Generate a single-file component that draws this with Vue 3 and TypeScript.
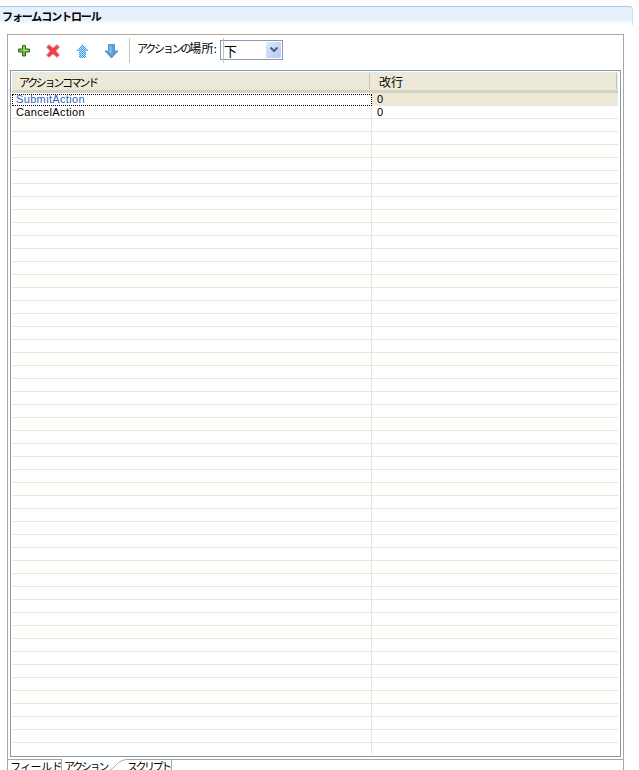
<script setup lang="ts">
interface ActionRow {
  command: string
  lineBreak: string
}

const actions: ActionRow[] = [
  { command: 'SubmitAction', lineBreak: '0' },
  { command: 'CancelAction', lineBreak: '0' }
]

const emptyRows = Array.from({ length: 48 }, (_, i) => i)
</script>

<template>
  <div class="page">
    <div class="title-bar">フォームコントロール</div>
    <div class="panel">
      <div class="toolbar">
        <button class="tool-btn" title="追加">
          <svg width="16" height="16" viewBox="0 0 16 16">
            <path d="M6.500 2.500h3v3.500h4v3h-4v4h-3v-4h-4v-3h4z" fill="#76b843" stroke="#2f6a1c" />
            <path d="M7.500 3.500h1v3.500h4v1h-5z" fill="#b4e08a" />
          </svg>
        </button>
        <button class="tool-btn" title="削除">
          <svg width="16" height="16" viewBox="0 0 16 16">
            <path d="M1.500 4 4 1.500 8 5 12 1.500 14.500 4 11 8 14.500 12 12 14.500 8 11 4 14.500 1.500 12 5 8z" fill="#ee4048" stroke="#e8a4a4" />
          </svg>
        </button>
        <button class="tool-btn" title="上へ">
          <svg width="16" height="16" viewBox="0 0 16 16">
            <defs>
              <pattern id="dither" width="2" height="2" patternUnits="userSpaceOnUse">
                <rect width="2" height="2" fill="#bfe4fa" />
                <rect width="1" height="1" fill="#3f9ae0" />
                <rect x="1" y="1" width="1" height="1" fill="#3f9ae0" />
              </pattern>
            </defs>
            <path d="M8.500 1 15 8H12V15H5V8H2z" fill="url(#dither)" />
          </svg>
        </button>
        <button class="tool-btn" title="下へ">
          <svg width="16" height="16" viewBox="0 0 16 16">
            <path d="M5.500 1.500H11.500V8H15L8.500 15 2 8H5.500z" fill="#5a9fdc" stroke="#3a78b4" stroke-width="0.700" />
            <path d="M6.500 2.500H8.500V11L5 8H6.500z" fill="#8cc0ec" />
          </svg>
        </button>
        <span class="toolbar-sep"></span>
        <label class="location-label">アクションの<span class="kanji">場所</span>:</label>
        <div class="select">
          <span class="select-tick"></span>
          <span class="select-value">下</span>
          <span class="select-arrow">
            <svg width="10" height="8" viewBox="0 0 10 8">
              <path d="M1.500 1.500 5 5 8.500 1.500" fill="none" stroke="#4d6185" stroke-width="2" />
            </svg>
          </span>
        </div>
      </div>

      <div class="table">
        <div class="table-head">
          <div class="head-cell first">アクションコマンド</div>
          <div class="head-cell second">改行</div>
        </div>
        <div class="table-body">
          <div
            v-for="(row, index) in actions"
            :key="row.command"
            class="row"
            :class="{ selected: index === 0 }"
          >
            <div class="cell first">{{ row.command }}</div>
            <div class="cell second">{{ row.lineBreak }}</div>
          </div>
          <div v-for="n in emptyRows" :key="n" class="row empty">
            <div class="cell first"></div>
            <div class="cell second"></div>
          </div>
          <div class="row tail">
            <div class="cell first"></div>
            <div class="cell second"></div>
          </div>
        </div>
      </div>
    </div>

    <div class="tabs">
      <div class="tab field">フィールド</div>
      <div class="tab action">アクション</div>
      <div class="tab-curve">
        <svg width="18" height="11" viewBox="0 0 18 11">
          <path d="M0 11C6 8 8 0.500 18 0.500" fill="none" stroke="#aca899" />
        </svg>
      </div>
      <div class="tab script">スクリプト</div>
    </div>
  </div>
</template>

<style>
html,
body {
  margin: 0;
  background: #fff;
  overflow: hidden;
}
</style>

<style scoped>
.page {
  width: 639px;
  height: 770px;
  overflow: hidden;
  padding-top: 6px;
  box-sizing: border-box;
  font-family: "Noto Sans CJK JP", "Liberation Sans", sans-serif;
  font-size: 11px;
  color: #000;
  background: #fff;
}

.title-bar {
  width: 633px;
  height: 19px;
  box-sizing: border-box;
  border-top: 1px solid #a9c8ee;
  border-right: 1px solid #cfe0f5;
  border-top-right-radius: 4px;
  background: linear-gradient(#e6f0fc 0, #e6f0fc 12px, #fff 100%);
  padding-left: 2px;
  font-size: 11px;
  font-weight: 700;
  letter-spacing: -1.1px;
  line-height: 18px;
}

.panel {
  margin: 9px 0 0 7px;
  width: 617px;
  height: 726px;
  box-sizing: border-box;
  border: 1px solid #aca899;
  padding: 0 2px;
}

.toolbar {
  height: 35px;
  display: flex;
  align-items: center;
}

.tool-btn {
  width: 29px;
  height: 16px;
  padding: 0 0 0 6px;
  margin-bottom: 4px;
  border: none;
  background: none;
  display: flex;
}

.tool-btn svg {
  display: block;
}

.toolbar-sep {
  width: 1px;
  height: 25px;
  background: #c8c5b5;
  margin: 0 7px 5px 3px;
}

.location-label {
  font-size: 11px;
  letter-spacing: -2.2px;
  line-height: 14px;
  margin-bottom: 9px;
  width: 83px;
  white-space: nowrap;
}

.location-label .kanji {
  font-size: 12px;
  letter-spacing: 0.3px;
}

.select {
  position: relative;
  width: 63px;
  height: 20px;
  margin-bottom: 5px;
  box-sizing: border-box;
  border: 1px solid #7f9db9;
  display: flex;
  justify-content: space-between;
  align-items: center;
  padding: 1px;
  background: #fff;
}

/* stray separator that shows through the select */
.select-tick {
  position: absolute;
  left: 2px;
  top: -3px;
  width: 1px;
  height: 25px;
  background: #c8c5b5;
}

.select-value {
  padding-left: 2px;
  font-size: 13px;
}

.select-arrow {
  width: 15px;
  height: 16px;
  background: linear-gradient(135deg, #dfe9fd, #b7c9f2);
  border-radius: 1px;
  display: flex;
  align-items: center;
  justify-content: center;
}

.table {
  height: 687px;
  box-sizing: border-box;
  border: 1px solid #7f9db9;
  padding: 1px 1px 0;
  overflow: hidden;
}

.table-head {
  display: flex;
  width: 606px;
  height: 21px;
  background: #ece9d8;
  border-bottom: 3px solid #d6d2c2;
  box-sizing: border-box;
}

.head-cell {
  font-size: 11px;
  line-height: 18px;
  box-sizing: border-box;
  border-right: 1px solid #c7c5b2;
  height: 16px;
  margin-top: 1px;
}

.head-cell.first {
  width: 358px;
  padding-left: 7px;
  letter-spacing: -2.3px;
}

.head-cell.second {
  width: 247px;
  padding-left: 9px;
  font-size: 12px;
}

.table-body {
  width: 606px;
}

.row {
  display: flex;
  height: 13px;
  box-sizing: border-box;
  border-bottom: 1px solid #e9e6d6;
  font-family: "Liberation Sans", sans-serif;
  font-size: 11px;
  letter-spacing: 0.35px;
  line-height: 12px;
}

.row.selected {
  border-bottom: none;
}

.row.tail {
  height: 11px;
  border-bottom: none;
}

.cell.first {
  width: 360px;
  box-sizing: border-box;
  padding-left: 4px;
  border-right: 1px solid #e9e6d6;
}

.cell.second {
  flex: 1;
  padding-left: 5px;
}

.row.selected .cell.first {
  height: 12px;
  margin-top: 1px;
  border-right: none;
  outline: 1px dotted #000;
  outline-offset: -1px;
  color: #2f5fc4;
  line-height: 11px;
}

.row.selected .cell.second {
  background: #ece9d8;
}

.tabs {
  display: flex;
  align-items: flex-start;
  position: relative;
  top: -1px;
  width: 617px;
  height: 11px;
  box-sizing: border-box;
  margin-left: 7px;
  border-left: 1px solid #aca899;
  border-right: 1px solid #aca899;
  font-size: 11px;
}

.tab {
  height: 11px;
  line-height: 14px;
  box-sizing: border-box;
  white-space: nowrap;
  overflow: hidden;
}

.tab.field {
  width: 54px;
  padding-left: 2px;
  letter-spacing: -0.6px;
  border-right: 1px solid #aca899;
}

/* active tab covers the panel's bottom border */
.tab.action {
  width: 48px;
  padding-left: 2px;
  letter-spacing: -2.3px;
  background: #fff;
}

.tab-curve {
  width: 17px;
  height: 11px;
  background: #fff;
  overflow: hidden;
}

.tab-curve svg {
  display: block;
}

.tab.script {
  width: 45px;
  letter-spacing: -2.5px;
  border-right: 1px solid #aca899;
}
</style>
